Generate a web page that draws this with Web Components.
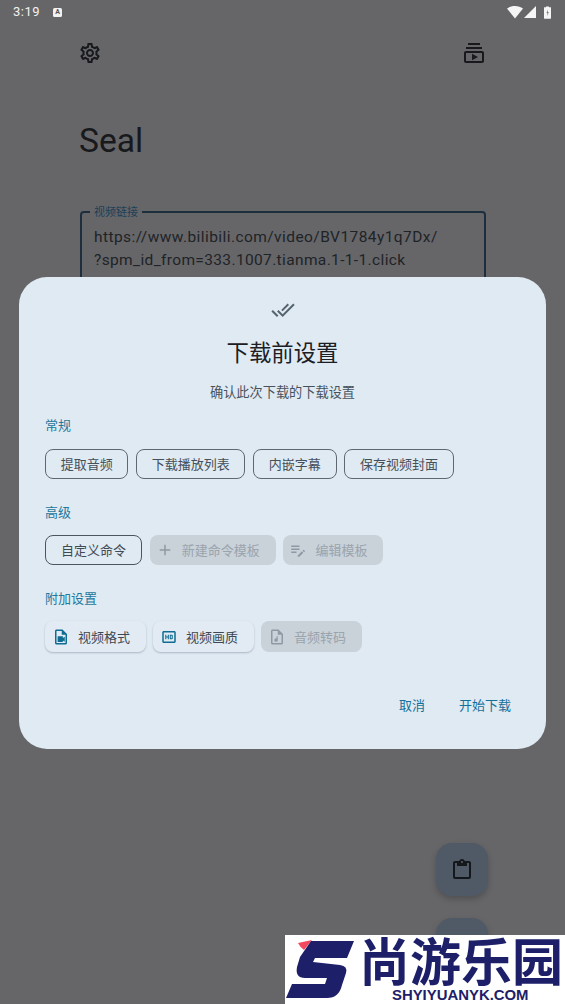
<!DOCTYPE html>
<html lang="zh-CN">
<head>
<meta charset="utf-8">
<title>Seal</title>
<style>
html,body{margin:0;padding:0;width:565px;height:1004px;overflow:hidden;background:#666669;font-family:Roboto,"Noto Sans CJK SC",sans-serif}
</style>
</head>
<body>
<seal-app></seal-app>
<script>
function def(name,css,html){
  customElements.define(name,class extends HTMLElement{
    constructor(){super();const s=this.attachShadow({mode:'open'});s.innerHTML='<style>'+css+'</style>'+html;}
  });
}
const ICON={
 gear:'<path d="M19.43 12.98c.04-.32.07-.64.07-.98 0-.34-.03-.66-.07-.98l2.11-1.65c.19-.15.24-.42.12-.64l-2-3.46c-.09-.16-.26-.25-.44-.25-.06 0-.12.01-.17.03l-2.49 1c-.52-.4-1.08-.73-1.69-.98l-.38-2.65C14.46 2.18 14.25 2 14 2h-4c-.25 0-.46.18-.49.42l-.38 2.65c-.61.25-1.17.59-1.69.98l-2.49-1c-.06-.02-.12-.03-.18-.03-.17 0-.34.09-.43.25l-2 3.46c-.13.22-.07.49.12.64l2.11 1.65c-.04.32-.07.65-.07.98 0 .33.03.66.07.98l-2.11 1.65c-.19.15-.24.42-.12.64l2 3.46c.09.16.26.25.44.25.06 0 .12-.01.17-.03l2.49-1c.52.4 1.08.73 1.69.98l.38 2.65c.03.24.24.42.49.42h4c.25 0 .46-.18.49-.42l.38-2.65c.61-.25 1.17-.59 1.69-.98l2.49 1c.06.02.12.03.18.03.17 0 .34-.09.43-.25l2-3.46c.12-.22.07-.49-.12-.64l-2.11-1.65zm-1.98-1.71c.04.31.05.52.05.73 0 .21-.02.43-.05.73l-.14 1.13.89.7 1.08.84-.7 1.21-1.27-.51-1.04-.42-.9.68c-.43.32-.84.56-1.25.73l-1.06.43-.16 1.13-.2 1.35h-1.4l-.19-1.35-.16-1.13-1.06-.43c-.43-.18-.83-.41-1.23-.71l-.91-.7-1.06.43-1.27.51-.7-1.21 1.08-.84.89-.7-.14-1.13c-.03-.31-.05-.54-.05-.74s.02-.43.05-.73l.14-1.13-.89-.7-1.08-.84.7-1.21 1.27.51 1.04.42.9-.68c.43-.32.84-.56 1.25-.73l1.06-.43.16-1.13.2-1.35h1.39l.19 1.35.16 1.13 1.06.43c.43.18.83.41 1.23.71l.91.7 1.06-.43 1.27-.51.7 1.21-1.07.85-.89.7.14 1.13zM12 8c-2.21 0-4 1.79-4 4s1.79 4 4 4 4-1.79 4-4-1.79-4-4-4zm0 6c-1.1 0-2-.9-2-2s.9-2 2-2 2 .9 2 2-.9 2-2 2z"/>',
 subs:'<path d="M20 8H4V6h16v2zm-2-6H6v2h12V2zm4 10v8c0 1.1-.9 2-2 2H4c-1.1 0-2-.9-2-2v-8c0-1.1.9-2 2-2h16c1.1 0 2 .9 2 2zm-2 0H4v8h16v-8zm-10 .73v6.53L16 16l-6-3.27z"/>',
 clip:'<path d="M19 3h-4.18C14.4 1.84 13.3 1 12 1s-2.4.84-2.82 2H5c-1.1 0-2 .9-2 2v14c0 1.1.9 2 2 2h14c1.1 0 2-.9 2-2V5c0-1.1-.9-2-2-2zm-7 0c.55 0 1 .45 1 1s-.45 1-1 1-1-.45-1-1 .45-1 1-1zm7 16H5V5h2v3h10V5h2v14z"/>',
 done:'<path d="M18 7l-1.41-1.41-6.34 6.34 1.41 1.41L18 7zm4.24-1.41L11.66 16.17 7.48 12l-1.41 1.41L11.66 19l12-12-1.42-1.41zM.41 13.41L6 19l1.41-1.41L1.83 12 .41 13.41z"/>',
 plus:'<path d="M19 13h-6v6h-2v-6H5v-2h6V5h2v6h6v2z"/>',
 note:'<path d="M3 10h11v2H3v-2zm0-2h11V6H3v2zm0 8h7v-2H3v2zm15.01-3.13.71-.71c.39-.39 1.02-.39 1.41 0l.71.71c.39.39.39 1.02 0 1.41l-.71.71-2.12-2.12zm-1.06 1.06-5.3 5.3V21h2.12l5.3-5.3-2.12-2.07z"/>',
 video:'<path d="M14 2H6c-1.1 0-2 .9-2 2v16c0 1.1.9 2 2 2h12c1.1 0 2-.9 2-2V8l-6-6zM6 20V4h7v5h5v11H6z"/><path d="M7.5 11h7v2.2l2.5-1.6v6.8l-2.5-1.6V18.5h-7z"/>',
 hd:'<path d="M19 4H5c-1.11 0-2 .9-2 2v12c0 1.1.89 2 2 2h14c1.1 0 2-.9 2-2V6c0-1.1-.9-2-2-2zm0 14H5V6h14v12z"/><path d="M7 9h1.4v2.3h2V9h1.4v6h-1.4v-2.4h-2V15H7zM13 9h3c.6 0 1 .4 1 1v4c0 .6-.4 1-1 1h-3zm1.4 1.3v3.4h1.2v-3.4z"/>',
 audio:'<path d="M14 2H6c-1.1 0-2 .9-2 2v16c0 1.1.9 2 2 2h12c1.1 0 2-.9 2-2V8l-6-6zM6 20V4h7v5h5v11H6z"/><path d="M13 11v4.6a2.3 2.3 0 1 1-1.5-1.6V11z"/>'
};
const svg=(n,s)=>`<svg width="${s}" height="${s}" viewBox="0 0 24 24" fill="currentColor" style="display:block;flex:none">${ICON[n]}</svg>`;

def('status-bar',`
:host{display:flex;align-items:center;height:24px;padding:0 14px 0 13px;color:#f2f2f2;font:400 13px/24px Roboto,sans-serif;letter-spacing:.5px}
.a{width:9px;height:9px;background:#f2f2f2;color:#555;border-radius:1.5px;margin-left:13px;font:700 7px/9px Roboto,sans-serif;text-align:center;letter-spacing:0}
.r{margin-left:auto;display:flex;align-items:center;gap:1px}`,
`<span>3:19</span><span class="a">A</span><span class="r">
<svg width="16" height="13" viewBox="0 0 16 13"><path d="M0 2.6C2.2.9 5 0 8 0s5.8.9 8 2.6L8 12.6z" fill="#f5f5f5"/></svg>
<svg width="12" height="12" viewBox="0 0 12 12"><path d="M12 0v12H0z" fill="#f5f5f5"/></svg>
<svg width="7" height="13" viewBox="0 0 8 14" style="margin-left:7px"><path d="M2.3 0h3.4v1H7.5c.3 0 .5.2.5.5v12c0 .3-.2.5-.5.5h-7c-.3 0-.5-.2-.5-.5v-12c0-.3.2-.5.5-.5h1.8z" fill="#f5f5f5"/><path d="M4.4 3.5 2.9 7.6h1.2L3.5 11l2-4.4H4.2z" fill="#666"/></svg></span>`);

def('top-bar',`
:host{display:flex;justify-content:space-between;padding:17px 79px 0 78px;height:24px;color:#17191c}`,
`<span>${svg('gear',24)}</span><span>${svg('subs',24)}</span>`);

def('app-title',`
:host{display:block;margin:55px 0 0 79px;font:400 33.6px/42px Roboto,sans-serif;color:#17191c}`,`<slot></slot>`);

def('url-field',`
:host{display:block;position:relative;margin:49px 79px 0 80px;height:120px;box-sizing:border-box;border:2px solid #1d2f3f;border-radius:4px;padding:13px 12px;color:#202326;font:400 15.5px/23px Roboto,sans-serif;letter-spacing:.43px}
.l{position:absolute;left:8px;top:-9px;padding:0 4px;background:#666669;color:#1e3f57;font:400 11px/14px "Noto Sans CJK SC",sans-serif;letter-spacing:0}`,
`<span class="l">视频链接</span><slot></slot>`);

def('fab-btn',`
:host{display:flex;align-items:center;justify-content:center;width:52px;height:53px;border-radius:16px;background:#505a66;color:#15181b;box-shadow:0 3px 6px rgba(0,0,0,.22)}`,
`<slot></slot>`);

def('opt-chip',`
:host{display:inline-flex;align-items:center;box-sizing:border-box;height:30px;border-radius:8px;padding:0 14.7px;font:400 13px/30px "Noto Sans CJK SC",sans-serif;color:#44505b;border:1px solid #5d6972;white-space:nowrap}
:host([dark]){color:#3f4a54;border-color:#4a5560;padding:0 15px}
:host([disabled]){border:0;background:#c9d1d9;color:#9aa4ad;padding:0 16px 0 6px}
:host([elev]){border:0;height:31px;background:#e2ebf3;color:#3c4853;padding:0 16px 0 7px;box-shadow:0 1px 2px rgba(70,90,110,.35)}
.ic{display:none;width:18px;height:18px;margin-right:8px;color:inherit}
:host([disabled]) .ic,:host([elev]) .ic{display:block}
:host([elev]) .ic{color:#0f6d91}
:host([disabled]) .ic{color:#8f99a3}`,
`<span class="ic"><slot name="icon"></slot></span><slot></slot>`);

def('chip-row',`
:host{display:flex;gap:7.7px;margin-top:14px}
:host([first]){margin-top:15px}
:host([tight]){gap:7px}
::slotted(*){flex:none}`,`<slot></slot>`);

def('section-label',`
:host{display:block;color:#22789c;font:400 13px/18px "Noto Sans CJK SC",sans-serif}`,`<slot></slot>`);

def('settings-dialog',`
:host{position:absolute;left:19px;top:277px;width:527px;height:472px;box-sizing:border-box;background:#e0eaf3;border-radius:28px;padding:21px 26px 0;display:block}
.top{display:flex;flex-direction:column;align-items:center}
.icon{color:#55636f}
h2{margin:14px 0 0;font:400 22.4px/30px "Noto Sans CJK SC",sans-serif;color:#1c2024}
p{margin:16px 0 0;font:400 13.2px/20px "Noto Sans CJK SC",sans-serif;color:#47525c}
.act{position:absolute;right:35px;top:418px;display:flex;gap:34px;color:#15709a;font:400 13px/20px "Noto Sans CJK SC",sans-serif}`,
`<div class="top"><span class="icon">${svg('done',24)}</span><h2>下载前设置</h2><p>确认此次下载的下载设置</p></div>
<slot></slot><div class="act"><span>取消</span><span>开始下载</span></div>`);

def('brand-mark',`
:host{position:absolute;right:0;bottom:0;width:280px;height:69px;background:#fff;color:#1d2068;display:block}
svg{position:absolute;left:0;top:0}
.cn{position:absolute;left:74px;top:1px;font:700 51px/46px "Noto Sans CJK SC",sans-serif;white-space:nowrap}
.en{position:absolute;left:107px;top:51px;font:700 14.9px/18px "Liberation Sans",sans-serif;white-space:nowrap}`,
`<svg width="72" height="69" viewBox="0 0 72 69"><path d="M13 8 27 5 19 15Q15 12 13 8Z" fill="#f4485f"/><path d="M26 6H69L62 23H30L28 27 55 30Q63 31 61 38L57 50Q54 63 42 63H1L7 49H40L42 43H20Q10 43 12 32L15 22Z" fill="#1d2068"/></svg>
<span class="cn">尚游乐园</span><span class="en">SHYIYUANYK.COM</span>`);

def('seal-app',`
:host{display:block;position:relative;width:565px;height:1004px;overflow:hidden;background:#666669}
.wrap{display:flex;flex-direction:column;height:100%}
.f{margin-top:auto;display:flex;flex-direction:column;align-items:flex-end;gap:22px;padding:0 77px 33px 0}
.u2{letter-spacing:.36px}`,
`<div class="wrap">
<status-bar></status-bar><top-bar></top-bar><app-title>Seal</app-title>
<url-field>https://www.bilibili.com/video/BV1784y1q7Dx/<br><span class="u2">?spm_id_from=333.1007.tianma.1-1-1.click</span></url-field>
<div class="f"><fab-btn>${svg('clip',24)}</fab-btn><fab-btn></fab-btn></div>
</div>
<settings-dialog>
 <section-label style="margin-top:14px">常规</section-label>
 <chip-row first><opt-chip>提取音频</opt-chip><opt-chip>下载播放列表</opt-chip><opt-chip>内嵌字幕</opt-chip><opt-chip>保存视频封面</opt-chip></chip-row>
 <section-label style="margin-top:24px">高级</section-label>
 <chip-row><opt-chip dark>自定义命令</opt-chip>
  <opt-chip disabled><span slot="icon">${svg('plus',18)}</span>新建命令模板</opt-chip>
  <opt-chip disabled><span slot="icon">${svg('note',18)}</span>编辑模板</opt-chip></chip-row>
 <section-label style="margin-top:24px">附加设置</section-label>
 <chip-row tight><opt-chip elev><span slot="icon">${svg('video',18)}</span>视频格式</opt-chip>
  <opt-chip elev><span slot="icon">${svg('hd',18)}</span>视频画质</opt-chip>
  <opt-chip disabled style="padding-left:7px;height:31px"><span slot="icon">${svg('audio',18)}</span>音频转码</opt-chip></chip-row>
</settings-dialog>
<brand-mark></brand-mark>`);
</script>
</body>
</html>
